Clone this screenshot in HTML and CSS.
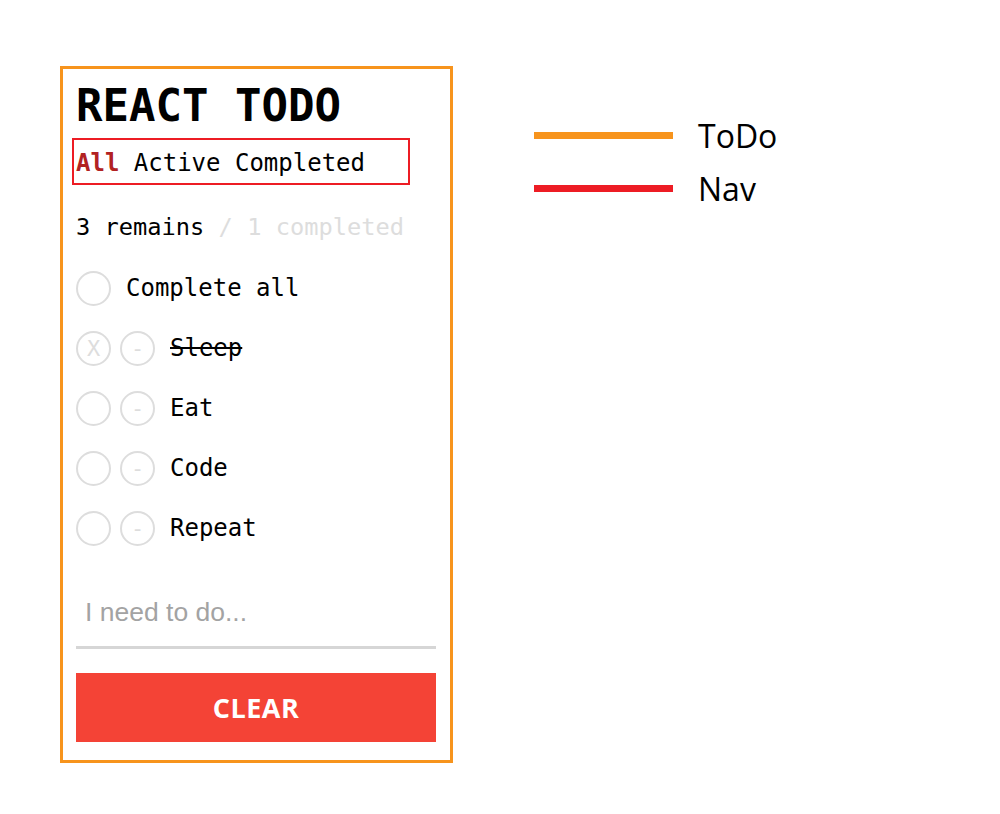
FILE: index.html
```html
<!DOCTYPE html>
<html>
<head>
<meta charset="utf-8">
<link rel="stylesheet" href="styles.css">
</head>
<body>
<div class="page">
  <div class="todo">
    <h1 class="title">REACT TODO</h1>
    <nav class="nav">
      <span class="nav-item active">All</span> <span class="nav-item">Active</span> <span class="nav-item">Completed</span>
    </nav>
    <div class="stats"><span class="remains">3 remains</span><span class="done"> / 1 completed</span></div>
    <ul class="list">
      <li class="row">
        <span class="circle"></span>
        <span class="label">Complete all</span>
      </li>
      <li class="row">
        <span class="circle">X</span>
        <span class="circle">-</span>
        <span class="label struck">Sleep</span>
      </li>
      <li class="row">
        <span class="circle"></span>
        <span class="circle">-</span>
        <span class="label">Eat</span>
      </li>
      <li class="row">
        <span class="circle"></span>
        <span class="circle">-</span>
        <span class="label">Code</span>
      </li>
      <li class="row">
        <span class="circle"></span>
        <span class="circle">-</span>
        <span class="label">Repeat</span>
      </li>
    </ul>
    <input class="input" type="text" placeholder="I need to do...">
    <button class="clear">CLEAR</button>
  </div>
  <div class="legend">
    <div class="legend-item"><span class="line line-todo"></span><span class="legend-text">ToDo</span></div>
    <div class="legend-item"><span class="line line-nav"></span><span class="legend-text">Nav</span></div>
  </div>
</div>
</body>
</html>
```
FILE: styles.css
```css
html, body {
  margin: 0;
  padding: 0;
  background: #fff;
}
.page {
  display: flex;
  align-items: flex-start;
  padding: 66px 0 0 60px;
}
.todo {
  box-sizing: border-box;
  width: 393px;
  border: 3px solid #f7941d;
  padding: 10px 14px 18px 13px;
  font-family: "DejaVu Sans Mono", monospace;
  color: #000;
}
.title {
  margin: 0;
  font-size: 44px;
  font-weight: bold;
  line-height: 54px;
}
.nav {
  display: inline-block;
  margin: 5px 0 0 -4px;
  border: 2px solid #ed1c24;
  padding: 4px 43px 0 2px;
  font-size: 24px;
  line-height: 39px;
  white-space: nowrap;
}
.nav-item.active {
  color: #b22222;
  font-weight: bold;
}
.stats {
  margin-top: 20px;
  font-size: 23.7px;
  line-height: 44px;
}
.done {
  color: #ddd;
}
.list {
  list-style: none;
  margin: 0;
  padding: 0;
  margin-top: 9px;
}
.row {
  display: flex;
  align-items: center;
  gap: 9px;
  height: 60px;
}
.circle {
  box-sizing: border-box;
  width: 35px;
  height: 35px;
  border: 2px solid #ddd;
  border-radius: 50%;
  display: flex;
  align-items: center;
  justify-content: center;
  color: #ddd;
  font-size: 22px;
  font-family: "DejaVu Sans Mono", monospace;
  flex: none;
}
.label {
  margin-left: 6px;
  font-size: 24px;
}
.struck {
  text-decoration: line-through;
}
.input {
  display: block;
  box-sizing: border-box;
  width: 100%;
  margin-top: 26px;
  height: 65px;
  border: none;
  border-bottom: 3px solid #d6d6d6;
  padding: 0 9px 6px;
  font-family: "Liberation Sans", Arial, sans-serif;
  font-size: 26.5px;
  outline: none;
}
.input::placeholder {
  color: #a3a3a3;
}
.clear {
  display: block;
  width: 100%;
  height: 69px;
  margin-top: 24px;
  border: none;
  background: #f44336;
  color: #fff;
  font-family: "Open Sans", sans-serif;
  font-weight: bold;
  font-size: 27px;
  letter-spacing: 0.5px;
  padding: 0;
}
.legend {
  margin-left: 81px;
  margin-top: 43px;
  display: flex;
  flex-direction: column;
}
.legend-item {
  display: flex;
  align-items: center;
  height: 53px;
}
.line {
  width: 139px;
  height: 7px;
  margin-right: 25px;
}
.line-todo { background: #f7941d; }
.line-nav { background: #ed1c24; }
.legend-text {
  font-family: "Open Sans", sans-serif;
  font-size: 32px;
  color: #000;
}
```
